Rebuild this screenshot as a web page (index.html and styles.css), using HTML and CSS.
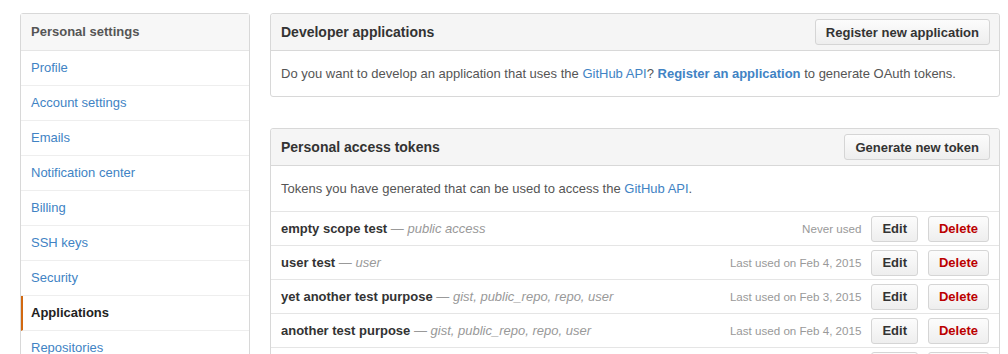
FILE: index.html
```html
<!DOCTYPE html>
<html lang="en">
<head>
  <meta charset="UTF-8">
  <title>Applications</title>
  <link rel="stylesheet" href="styles.css">
</head>
<body>
  <div class="page">
    <nav class="menu">
      <h3 class="menu-heading">Personal settings</h3>
      <a class="menu-item" href="#">Profile</a>
      <a class="menu-item" href="#">Account settings</a>
      <a class="menu-item" href="#">Emails</a>
      <a class="menu-item" href="#">Notification center</a>
      <a class="menu-item" href="#">Billing</a>
      <a class="menu-item" href="#">SSH keys</a>
      <a class="menu-item" href="#">Security</a>
      <a class="menu-item selected" href="#">Applications</a>
      <a class="menu-item" href="#">Repositories</a>
    </nav>

    <div class="main">
      <div class="boxed-group">
        <div class="group-header">
          <h3>Developer applications</h3>
          <button class="btn">Register new application</button>
        </div>
        <div class="group-body">
          Do you want to develop an application that uses the <a href="#">GitHub API</a>?
          <a class="strong" href="#">Register an application</a> to generate OAuth tokens.
        </div>
      </div>

      <div class="boxed-group">
        <div class="group-header">
          <h3>Personal access tokens</h3>
          <button class="btn">Generate new token</button>
        </div>
        <div class="group-body">
          Tokens you have generated that can be used to access the <a href="#">GitHub API</a>.
        </div>
        <ul class="token-list">
          <li class="token">
            <span class="token-desc"><strong>empty scope test</strong> <span class="scopes">— <em>public access</em></span></span>
            <span class="last-used">Never used</span>
            <button class="btn btn-sm">Edit</button>
            <button class="btn btn-sm btn-danger">Delete</button>
          </li>
          <li class="token">
            <span class="token-desc"><strong>user test</strong> <span class="scopes">— <em>user</em></span></span>
            <span class="last-used">Last used on Feb 4, 2015</span>
            <button class="btn btn-sm">Edit</button>
            <button class="btn btn-sm btn-danger">Delete</button>
          </li>
          <li class="token">
            <span class="token-desc"><strong>yet another test purpose</strong> <span class="scopes">— <em>gist, public_repo, repo, user</em></span></span>
            <span class="last-used">Last used on Feb 3, 2015</span>
            <button class="btn btn-sm">Edit</button>
            <button class="btn btn-sm btn-danger">Delete</button>
          </li>
          <li class="token">
            <span class="token-desc"><strong>another test purpose</strong> <span class="scopes">— <em>gist, public_repo, repo, user</em></span></span>
            <span class="last-used">Last used on Feb 4, 2015</span>
            <button class="btn btn-sm">Edit</button>
            <button class="btn btn-sm btn-danger">Delete</button>
          </li>
          <li class="token">
            <span class="token-desc"><strong>test</strong> <span class="scopes">— <em>repo</em></span></span>
            <span class="last-used">Last used on Feb 4, 2015</span>
            <button class="btn btn-sm">Edit</button>
            <button class="btn btn-sm btn-danger">Delete</button>
          </li>
        </ul>
      </div>
    </div>
  </div>
</body>
</html>
```

FILE: styles.css
```css
* {
  box-sizing: border-box;
}
body {
  margin: 0;
  font-family: "Liberation Sans", Arial, sans-serif;
  font-size: 13px;
  color: #333;
  background: #fff;
  overflow: hidden;
}
a {
  color: #4183c4;
  text-decoration: none;
}
.page {
  display: flex;
  gap: 20px;
  padding: 13px 8px 0 20px;
}

/* sidebar menu */
.menu {
  width: 230px;
  flex-shrink: 0;
  border: 1px solid #d8d8d8;
  border-radius: 3px;
  background: #fff;
}
.menu-heading {
  margin: 0;
  height: 37px;
  line-height: 36px;
  padding: 0 10px;
  font-size: 13px;
  color: #555;
  background: #f7f7f7;
  border-bottom: 1px solid #e5e5e5;
}
.menu-item {
  display: block;
  height: 35px;
  line-height: 34px;
  padding: 0 10px;
  border-bottom: 1px solid #eee;
}
.menu-item.selected {
  padding-left: 8px;
  border-left: 2px solid #d26911;
  color: #222;
  font-weight: bold;
}

/* main column */
.main {
  flex: 1;
}
.boxed-group {
  border: 1px solid #d8d8d8;
  border-radius: 3px;
  margin-bottom: 31px;
}
.group-header {
  display: flex;
  justify-content: space-between;
  align-items: center;
  height: 37px;
  padding: 0 9px 0 10px;
  background: #f5f5f5;
  border-bottom: 1px solid #d8d8d8;
  border-radius: 3px 3px 0 0;
}
.group-header h3 {
  margin: 0;
  font-size: 14px;
}
.group-body {
  padding: 0 10px;
  height: 45px;
  line-height: 45px;
  color: #555;
}
.group-body .strong {
  font-weight: bold;
}

.btn {
  font-family: inherit;
  font-size: 13px;
  font-weight: bold;
  color: #333;
  height: 26px;
  padding: 0 10px;
  border: 1px solid #d5d5d5;
  border-radius: 3px;
  background: linear-gradient(#fcfcfc, #eee);
  cursor: pointer;
}
.btn-sm {
  margin-left: 10px;
}
.btn-danger {
  color: #b00;
}

/* token rows */
.token-list {
  list-style: none;
  margin: 0;
  padding: 0;
}
.token {
  display: flex;
  align-items: center;
  height: 34px;
  padding: 0 10px;
  border-top: 1px solid #e5e5e5;
}
.token-desc {
  flex: 1;
}
.token-desc strong {
  color: #333;
}
.scopes {
  color: #999;
}
.last-used {
  font-size: 11.6px;
  color: #999;
}
```
